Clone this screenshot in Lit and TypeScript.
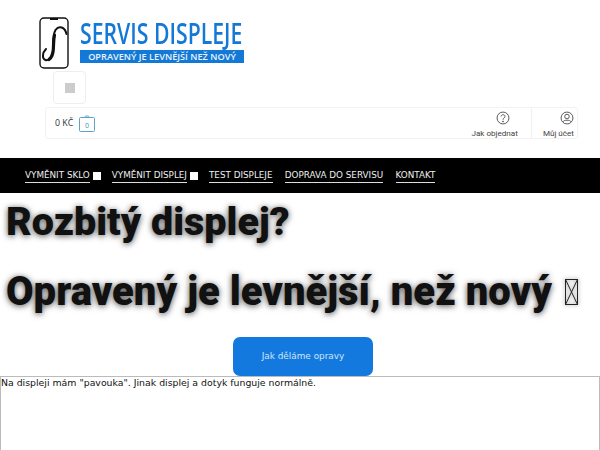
import { LitElement, html, css } from "lit";
import { customElement } from "lit/decorators.js";

@customElement("app-root")
export class AppRoot extends LitElement {
  static styles = css`
    :host { display: block; width: 600px; height: 450px; overflow: hidden; background: #fff; font-family: "DejaVu Sans", sans-serif; color: #222; }
    .top { height: 158px; padding: 17px 0 0 39px; box-sizing: border-box; display: flex; flex-direction: column; align-items: flex-start; }
    .logo { display: flex; gap: 11px; height: 52px; }
    .phone { width: 30px; height: 52px; display: block; }
    .brand { display: flex; flex-direction: column; width: 164px; }
    .name { font: 600 28px/33px "Open Sans", sans-serif; color: #1479d6; height: 33px; white-space: nowrap; transform: scaleX(.758); transform-origin: left center; }
    .tag { width: 164px; height: 13px; background: #1479d6; color: #e8f3fc; font: 600 9.2px/13px "Open Sans", sans-serif; text-align: center; white-space: nowrap; }
    .menu { width: 33px; height: 33px; margin: 2px 0 0 14px; box-sizing: border-box; border: 1px solid #eee; border-radius: 4px; display: flex; align-items: center; justify-content: center; }
    .menu span { width: 10px; height: 10px; background: #ccc; display: block; }
    .bar { width: 533px; height: 32px; margin: 3px 0 0 6px; box-sizing: border-box; border: 1px solid #f2f2f2; border-radius: 3px; display: flex; align-items: center; padding-left: 9px; font-family: "Open Sans", sans-serif; }
    .sum { font: 500 8.8px/1 "Open Sans", sans-serif; color: #333; margin-right: 6px; }
    .bag { width: 16px; height: 17px; display: block; }
    .links { margin-left: auto; display: flex; height: 100%; }
    .link { display: flex; flex-direction: column; align-items: flex-end; justify-content: flex-end; gap: 3px; padding: 0 13px 0 0; font: 400 8.1px/10px Roboto, sans-serif; color: #444; height: 100%; box-sizing: border-box; }
    .link.first { border-right: 1px solid #f0f0f0; }
    .link.first svg { margin-right: 8px; }
    .link.last { padding: 0 3px 0 11px; }
    .link svg { width: 14px; height: 14px; display: block; }
    nav { background: #000; height: 35px; display: flex; align-items: center; padding: 1px 0 0 25px; box-sizing: border-box; color: #fff; font: 8.8px "DejaVu Sans", sans-serif; }
    nav a { color: #eee; white-space: nowrap; border-bottom: 1px solid #ddd; line-height: 12px; padding-bottom: 1px; margin-right: 12.3px; }
    nav a.sub { margin-right: 3px; }
    nav i { width: 8px; height: 8px; background: #fff; display: block; margin-right: 11px; }
    .hero { padding: 6px 0 0 6px; }
    h1 { margin: 0; font: 900 39.5px/46px Roboto, sans-serif; color: #111; text-shadow: 0 1px 6px rgba(0,0,0,.7); white-space: nowrap; display: flex; align-items: center; }
    h1.two { margin-top: 24px; font-size: 40px; }
    .tofu { width: 13px; height: 26px; margin: 0 0 0 13px; display: block; filter: drop-shadow(0 0 2px rgba(0,0,0,.5)); }
    .cta { height: 39px; width: 140px; margin: 22px 0 0 233px; background: #1479de; border-radius: 7px; color: #cfe6fa; display: flex; align-items: center; justify-content: center; font: 8.9px "DejaVu Sans", sans-serif; padding-bottom: 1px; box-sizing: border-box; }
    .ta { display: block; width: 600px; height: 74px; box-sizing: border-box; margin: 0; padding: 0; border: 1px solid #bbb; border-bottom: 0; resize: none; outline: 0; font: 9.36px/11px "DejaVu Sans", sans-serif; color: #111; background: #fff; overflow: hidden; }
  `;

  render() {
    return html`
      <div class="top">
        <div class="logo">
          <svg class="phone" viewBox="0 0 30 52" fill="none">
            <rect x="1" y="1" width="28" height="50" rx="4" stroke="#111" stroke-width="1.4"/>
            <path d="M11 2h8" stroke="#111" stroke-width="2"/>
            <path d="M27.5 17C26 10 20 8 16.5 13C13 19 15 28 14 34C13 40 10 44 6.5 43C3 42 3 36 7 32" stroke="#111" stroke-width="2" stroke-linecap="round"/>
            <path d="M15.5 18C14 24 15 29 14 35C13.5 38 12 41 10 42.5" stroke="#111" stroke-width="3.2" stroke-linecap="round"/>
          </svg>
          <div class="brand">
            <div class="name">SERVIS DISPLEJE</div>
            <div class="tag">OPRAVENÝ JE LEVNĚJŠÍ NEŽ NOVÝ</div>
          </div>
        </div>
        <div class="menu"><span></span></div>
        <div class="bar">
          <span class="sum">0 KČ</span>
          <svg class="bag" viewBox="0 0 16 17" fill="none">
            <rect x=".5" y="2.5" width="15" height="14" rx="1" stroke="#5ba3c9"/>
            <path d="M5.5 2.5C5.5 .5 10.5 .5 10.5 2.5" stroke="#5ba3c9"/>
            <text x="8" y="12.5" text-anchor="middle" font-size="7" font-family="Open Sans" fill="#3f8fbb">0</text>
          </svg>
          <div class="links">
            <div class="link first">
              <svg viewBox="0 0 16 16" fill="none" stroke="#444" stroke-width="1">
                <circle cx="8" cy="8" r="6.8"/>
                <path d="M5.8 6.2C5.8 3.6 10.3 3.6 10.3 6.2C10.3 8 8 8 8 10"/>
                <circle cx="8" cy="12" r=".5" fill="#444"/>
              </svg>
              <span>Jak objednat</span>
            </div>
            <div class="link last">
              <svg viewBox="0 0 16 16" fill="none" stroke="#444" stroke-width="1">
                <circle cx="8" cy="8" r="6.8"/>
                <circle cx="8" cy="6.3" r="2.6"/>
                <path d="M3.6 12.2C4 10 12 10 12.4 12.2"/>
              </svg>
              <span>Můj účet</span>
            </div>
          </div>
        </div>
      </div>
      <nav>
        <a class="sub">VYMĚNIT SKLO</a><i></i>
        <a class="sub">VYMĚNIT DISPLEJ</a><i></i>
        <a>TEST DISPLEJE</a>
        <a>DOPRAVA DO SERVISU</a>
        <a>KONTAKT</a>
      </nav>
      <div class="hero">
        <h1>Rozbitý displej?</h1>
        <h1 class="two">Opravený je levnější, než nový
          <svg class="tofu" viewBox="0 0 13 26" fill="none" stroke="#222" stroke-width="1">
            <rect x=".5" y=".5" width="12" height="25"/>
            <path d="M.5 .5L12.5 25.5M12.5 .5L.5 25.5"/>
          </svg>
        </h1>
      </div>
      <div class="cta">Jak děláme opravy</div>
      <textarea class="ta" .value=${'Na displeji mám "pavouka". Jinak displej a dotyk funguje normálně.'}></textarea>
    `;
  }
}
